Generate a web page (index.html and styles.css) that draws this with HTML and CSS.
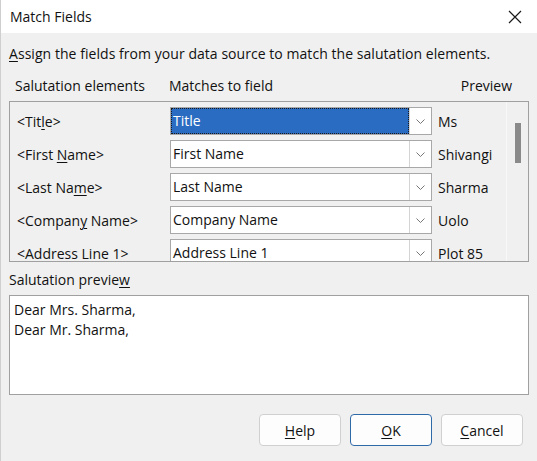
FILE: index.html
```html
<!DOCTYPE html>
<html lang="en">
<head>
    <meta charset="UTF-8">
    <title>Match Fields</title>
    <link rel="stylesheet" href="styles.css">
</head>
<body>
    <div class="window">
        <!-- Title Bar -->
        <div class="titlebar">
            <span class="title">Match Fields</span>
            <svg class="close" width="14" height="14" viewBox="0 0 14 14">
                <path d="M1 1 L13 13 M13 1 L1 13" stroke="#1a1a1a" stroke-width="1.2" fill="none"/>
            </svg>
        </div>

        <div class="content">
            <p class="intro"><u>A</u>ssign the fields from your data source to match the salutation elements.</p>

            <div class="headers">
                <span class="col-element">Salutation elements</span>
                <span class="col-field">Matches to field</span>
                <span class="col-preview">Preview</span>
            </div>

            <!-- Field list -->
            <div class="listbox">
                <div class="rows">
                    <div class="row">
                        <span class="element">&lt;Tit<u>l</u>e&gt;</span>
                        <div class="combo selected">
                            <span class="combo-text">Title</span>
                            <span class="combo-btn"><svg width="9" height="5" viewBox="0 0 9 5"><path d="M0.5 0.5 L4.5 4.5 L8.5 0.5" stroke="#777" fill="none"/></svg></span>
                        </div>
                        <span class="preview">Ms</span>
                    </div>
                    <div class="row">
                        <span class="element">&lt;First <u>N</u>ame&gt;</span>
                        <div class="combo">
                            <span class="combo-text">First Name</span>
                            <span class="combo-btn"><svg width="9" height="5" viewBox="0 0 9 5"><path d="M0.5 0.5 L4.5 4.5 L8.5 0.5" stroke="#777" fill="none"/></svg></span>
                        </div>
                        <span class="preview">Shivangi</span>
                    </div>
                    <div class="row">
                        <span class="element">&lt;Last Na<u>m</u>e&gt;</span>
                        <div class="combo">
                            <span class="combo-text">Last Name</span>
                            <span class="combo-btn"><svg width="9" height="5" viewBox="0 0 9 5"><path d="M0.5 0.5 L4.5 4.5 L8.5 0.5" stroke="#777" fill="none"/></svg></span>
                        </div>
                        <span class="preview">Sharma</span>
                    </div>
                    <div class="row">
                        <span class="element">&lt;Compan<u>y</u> Name&gt;</span>
                        <div class="combo">
                            <span class="combo-text">Company Name</span>
                            <span class="combo-btn"><svg width="9" height="5" viewBox="0 0 9 5"><path d="M0.5 0.5 L4.5 4.5 L8.5 0.5" stroke="#777" fill="none"/></svg></span>
                        </div>
                        <span class="preview">Uolo</span>
                    </div>
                    <div class="row">
                        <span class="element">&lt;Address Line <u>1</u>&gt;</span>
                        <div class="combo">
                            <span class="combo-text">Address Line 1</span>
                            <span class="combo-btn"><svg width="9" height="5" viewBox="0 0 9 5"><path d="M0.5 0.5 L4.5 4.5 L8.5 0.5" stroke="#777" fill="none"/></svg></span>
                        </div>
                        <span class="preview">Plot 85</span>
                    </div>
                </div>
                <div class="scrollbar">
                    <div class="thumb"></div>
                </div>
            </div>

            <p class="preview-label">Salutation previe<u>w</u></p>
            <div class="salutation-box">
                <div>Dear Mrs. Sharma,</div>
                <div>Dear Mr. Sharma,</div>
            </div>

            <div class="buttons">
                <button class="btn"><u>H</u>elp</button>
                <button class="btn default"><u>O</u>K</button>
                <button class="btn"><u>C</u>ancel</button>
            </div>
        </div>
    </div>
</body>
</html>
```

FILE: styles.css
```css
/* General Page Styling */
body {
    margin: 0;
    font-family: 'Open Sans', 'Noto Sans', sans-serif;
    font-size: 14px;
    color: #111111;
    background-color: #f0f0f0;
}

u {
    text-decoration-thickness: 1px;
    text-underline-offset: 2px;
}

.window {
    width: 536px;
    height: 461px;
    border-left: 1px solid #cfcfcf;
    background-color: #f0f0f0;
    overflow: hidden;
}

/* Title Bar */
.titlebar {
    height: 33px;
    background-color: #ffffff;
    display: flex;
    align-items: center;
    justify-content: space-between;
    padding: 0 15px 0 9px;
}

.title {
    font-size: 14px;
}

.close {
    display: block;
}

/* Content */
.content {
    padding: 0 8px 0 8px;
}

.intro {
    margin: 11px 0 0;
    line-height: 20px;
    letter-spacing: 0.05px;
}

.headers {
    display: flex;
    margin-top: 12px;
    line-height: 20px;
}

.col-element {
    width: 154px;
    padding-left: 6px;
}

.col-field {
    flex: 1;
}

.col-preview {
    padding-right: 17px;
}

/* List Box */
.listbox {
    margin-top: 5px;
    height: 159px;
    border: 1px solid #a0a0a0;
    display: flex;
    overflow: hidden;
}

.rows {
    flex: 1;
    padding: 5px 0 0 7px;
}

.row {
    display: flex;
    align-items: center;
    height: 28px;
    margin-bottom: 5px;
}

.element {
    width: 153px;
}

.combo {
    width: 260px;
    height: 26px;
    border: 1px solid #a8a8a8;
    background-color: #ffffff;
    display: flex;
    align-items: stretch;
}

.combo-text {
    flex: 1;
    padding-left: 2px;
    line-height: 26px;
}

.combo.selected .combo-text {
    background-color: #2a6cc2;
    color: #ffffff;
    outline: 1px dotted #1a1a1a;
    outline-offset: -1px;
}

.combo-btn {
    width: 21px;
    border-left: 1px solid #d4d4d4;
    display: flex;
    align-items: center;
    justify-content: center;
}

.preview {
    padding-left: 6px;
}

.scrollbar {
    width: 21px;
    border-left: 1px solid #f8f8f8;
    display: flex;
    justify-content: center;
}

.thumb {
    width: 6px;
    height: 40px;
    margin-top: 21px;
    background-color: #8a8a8a;
}

/* Salutation preview */
.preview-label {
    margin: 8px 0 0;
    line-height: 20px;
}

.salutation-box {
    margin-top: 5px;
    height: 90px;
    border: 1px solid #a0a0a0;
    background-color: #ffffff;
    padding: 4px 4px;
    line-height: 20px;
}

/* Buttons */
.buttons {
    display: flex;
    justify-content: flex-end;
    gap: 9px;
    margin-top: 19px;
    padding-right: 6px;
}

.btn {
    width: 82px;
    height: 32px;
    font-family: 'Open Sans', 'Noto Sans', sans-serif;
    font-size: 14px;
    color: #111111;
    background-color: #fdfdfd;
    border: 1px solid #d0d0d0;
    border-radius: 4px;
}

.btn.default {
    border-color: #2f6aa8;
}
```
